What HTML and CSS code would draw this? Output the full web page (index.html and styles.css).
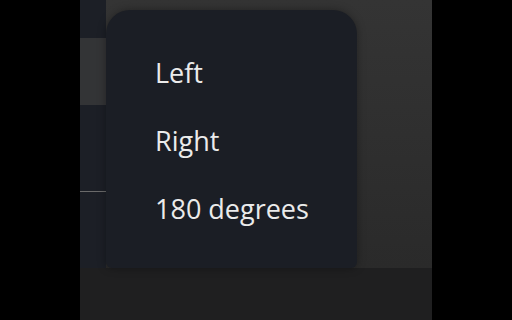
FILE: index.html
```html
<!DOCTYPE html>
<html lang="en">
<head>
    <meta charset="UTF-8">
    <meta name="viewport" content="width=device-width, initial-scale=1.0">
    <title>Rotate menu</title>
    <link rel="stylesheet" href="styles.css">
</head>
<body>
    <div class="screen">
        <aside class="side">
            <div class="side-top"></div>
            <div class="side-tab"></div>
            <div class="side-rest"></div>
        </aside>

        <main class="stage">
            <ul class="menu">
                <li>Left</li>
                <li>Right</li>
                <li>180 degrees</li>
            </ul>
        </main>

        <footer class="bottom"></footer>
    </div>
</body>
</html>
```

FILE: styles.css
```css
body {
    margin: 0;
    background-color: #000;
    font-family: "Open Sans", "Noto Sans", sans-serif;
}

.screen {
    display: grid;
    grid-template-columns: 26px 1fr;
    grid-template-rows: 268px 1fr;
    width: 352px;
    height: 320px;
    margin-left: 80px;
    background-color: #1f1f20;
}

.side {
    display: flex;
    flex-direction: column;
    background-color: #1c1f26;
}

.side-top {
    height: 38px;
}

.side-tab {
    height: 67px;
    background-color: #333436;
}

.side-rest {
    height: 86px;
    border-bottom: 1px solid #6a6a6a;
}

.stage {
    background: linear-gradient(#343434, #2a2a2a);
    padding-top: 10px;
}

.menu {
    list-style: none;
    margin: 0;
    padding: 46px 0 0 49px;
    width: 202px;
    height: 212px;
    background-color: #1b1e25;
    border-radius: 24px 24px 6px 6px;
    box-shadow: 0 0 8px rgba(0, 0, 0, 0.35);
    display: flex;
    flex-direction: column;
    gap: 34px;
}

.menu li {
    color: #ebebeb;
    font-size: 27px;
    line-height: 34px;
}

.bottom {
    grid-column: 1 / 3;
}
```
